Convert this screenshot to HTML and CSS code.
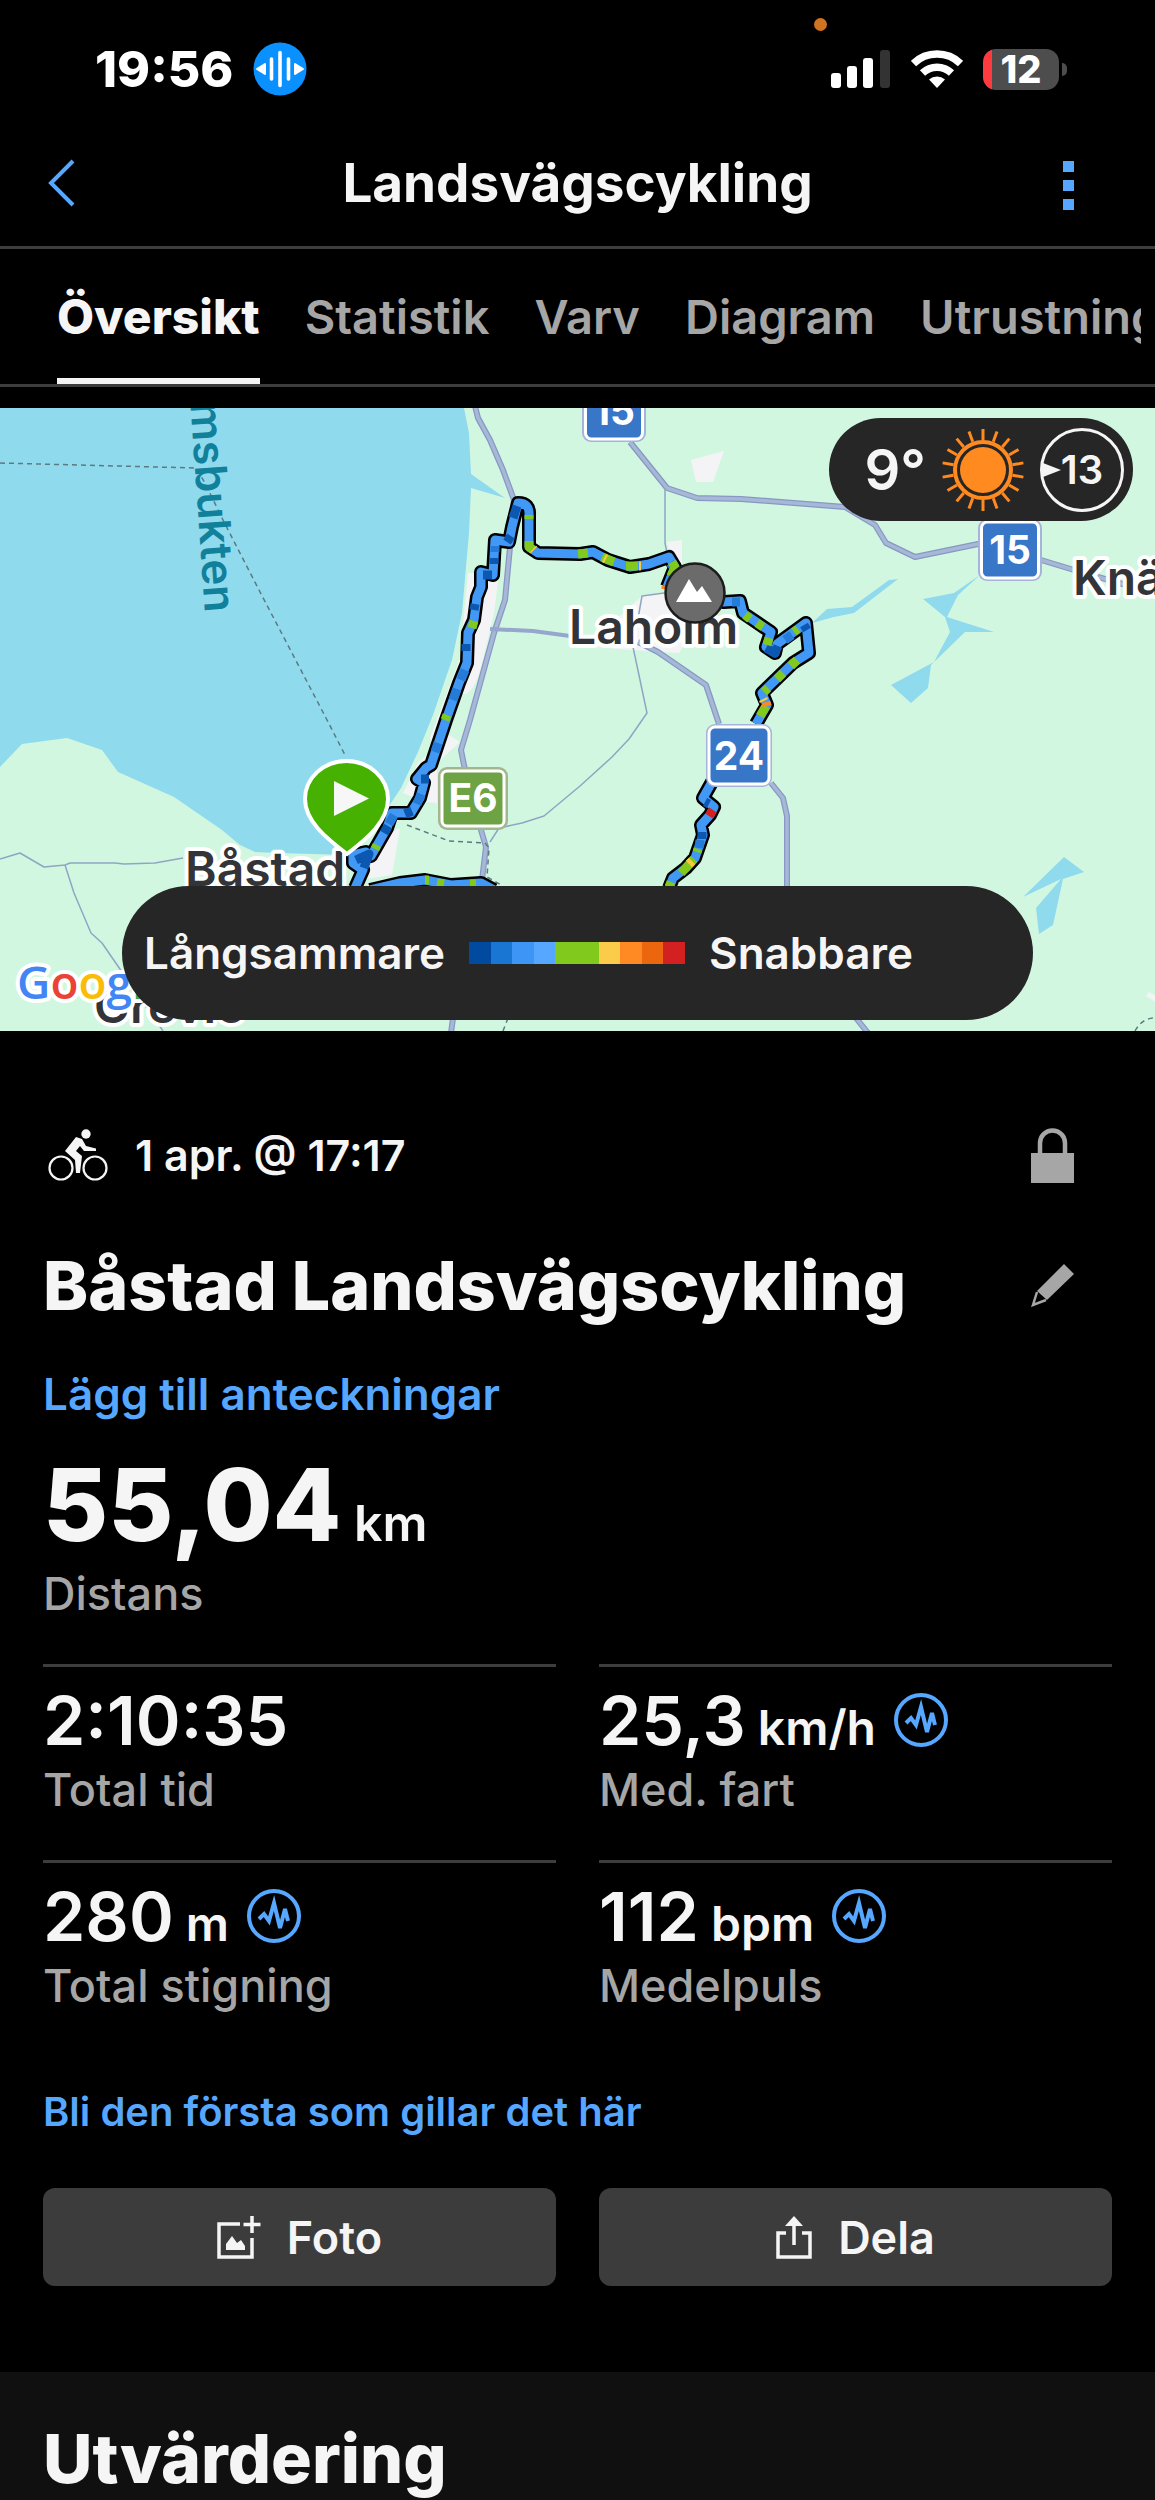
FILE: index.html
```html
<!DOCTYPE html>
<html lang="sv">
<head>
    <meta charset="UTF-8">
    <meta name="viewport" content="width=device-width, initial-scale=1.0">
    <title>Landsvägscykling</title>
    <link rel="stylesheet" href="styles.css">
</head>
<body>
    <div class="status-bar">
        <div class="status-left">
            <span class="clock">19:56</span>
            <svg width="54" height="54" viewBox="0 0 54 54" aria-hidden="true">
                <circle cx="27" cy="27" r="26.500" fill="#0a91ff"/>
                <path d="M18.500 17v20M27 10.500v33M35.500 17v20" stroke="#fff" stroke-width="3.600" stroke-linecap="round"/>
                <path d="M4 27l8-5v10zM50 27l-8-5v10z" fill="#fff" stroke="#fff" stroke-width="2" stroke-linejoin="round"/>
            </svg>
        </div>
        <span class="mic-dot"></span>
        <div class="status-right">
            <svg width="60" height="40" viewBox="0 0 60 40" aria-hidden="true">
                <g fill="#fff">
                    <rect x="0" y="24" width="10" height="15" rx="3"/>
                    <rect x="16" y="17" width="10" height="22" rx="3"/>
                    <rect x="32" y="9" width="10" height="30" rx="3"/>
                </g>
                <rect x="49" y="1" width="10" height="38" rx="3" fill="#333"/>
            </svg>
            <svg width="52" height="40" viewBox="0 0 52 40" aria-hidden="true">
                <g fill="none" stroke="#fff" stroke-width="7.500">
                    <path d="M2.500 14.500a34 34 0 0 1 47 0"/>
                    <path d="M11.500 24a21 21 0 0 1 29 0"/>
                </g>
                <path d="M26 39l-8-8.500a12 12 0 0 1 16 0z" fill="#fff"/>
            </svg>
            <div class="battery"><span class="battery-level">12</span></div>
        </div>
    </div>

    <header class="header">
        <button class="icon-btn" aria-label="Tillbaka">
            <svg width="30" height="50" viewBox="0 0 30 50"><path d="M27 3L5 25l22 22" fill="none" stroke="#56a7ff" stroke-width="4"/></svg>
        </button>
        <h1>Landsvägscykling</h1>
        <button class="icon-btn more" aria-label="Mer">
            <svg width="11" height="56" viewBox="0 0 11 56" fill="#56a7ff"><path d="M0 6h11v11H0zM0 25h11v11H0zM0 44h11v11H0z"/></svg>
        </button>
    </header>

    <nav class="tabs">
        <div class="tab-list">
            <a href="#oversikt" class="active">Översikt</a>
            <a href="#statistik">Statistik</a>
            <a href="#varv">Varv</a>
            <a href="#diagram">Diagram</a>
            <a href="#utrustning">Utrustning</a>
        </div>
    </nav>

    <div class="map">
        <svg class="map-canvas" viewBox="0 0 1155 623" role="img" aria-label="Karta">
            <rect width="1155" height="623" fill="#d2f7e1"/>

            <!-- water -->
            <g fill="#90daee">
                <path d="M0 0H464L469 25L471 66L505 90L471 80L469 125L466 159L462 205L452 252L433 307L418 344L401 380L385 404L348 447L277 445L255 444L240 437L222 422L174 389L118 364L102 342L67 330L22 336L0 359Z"/>
                <path d="M812 215L827 201L852 199L889 172L898 171L854 205L834 209Z"/>
                <path d="M923 191L954 185L980 167L958 187L947 209L994 224L965 224L931 257L928 280L911 295L891 277L934 254L950 224L945 209Z"/>
                <path d="M1023 489L1064 449L1084 464L1063 471L1053 517L1039 526L1036 500L1061 471Z"/>
            </g>

            <!-- towns -->
            <g fill="#f4f4f6">
                <path d="M468 165H499L494 205L481 259Q472 292 459 285L446 300L433 345L430 330L460 250Z"/>
                <path d="M449 327L460 334L437 355V395L424 394L403 385L418 355Z"/>
                <path d="M400 420L392 467L365 471L380 430Z"/>
                <path d="M691 52L724 43L713 74H696Z"/>
                <path d="M667 134L682 132V165L672 155Z"/>
                <path d="M642 188L666 185L697 209L685 235L679 245L630 242L586 238Z"/>
                <path d="M1146 588l3-4l10 6v6z"/>
            </g>

            <!-- roads -->
            <g fill="none" stroke-linejoin="round">
                <g stroke="#8798c4" stroke-width="6">
                    <path d="M475-2L478 10L490 32L503 62L514 92L510 139L505 192L494 225L470 312L461 342L464 357L481 422L486 439L481 480M453 610L451 625"/>
                    <path d="M630 34L667 80L697 90L741 91L845 99L875 117L886 135L915 149L978 136L1041 152L1074 162L1126 177"/>
                    <path d="M638 234L658 244L706 277L719 316M771 375L783 390L787 408V480M856 610L868 625"/>
                </g>
                <g stroke="#a6b8d6" stroke-width="3.500">
                    <path d="M475-2L478 10L490 32L503 62L514 92L510 139L505 192L494 225L470 312L461 342L464 357L481 422L486 439L481 480M453 610L451 625"/>
                    <path d="M630 34L667 80L697 90L741 91L845 99L875 117L886 135L915 149L978 136L1041 152L1074 162L1126 177"/>
                    <path d="M638 234L658 244L706 277L719 316M771 375L783 390L787 408V480M856 610L868 625"/>
                </g>
                <path d="M490 221L533 223L570 228" stroke="#95a7cc" stroke-width="4"/>
                <g stroke="#8fa6c2" stroke-width="1.500">
                    <path d="M665 80V135L668 150M664 185L642 188L633 239L647 305L629 331L612 349L580 378L544 408L522 415L499 420L490 434"/>
                    <path d="M0 451L20 445L44 459L65 457L70 455L115 455L124 456L155 455L183 450M65 457L74 485L91 525L102 535L122 564L163 623"/>
                </g>
                <g stroke="#5c7a80" stroke-width="1.500" stroke-dasharray="5 4">
                    <path d="M0 55L196 60L205 75L222 110L259 182L326 310L345 347"/>
                    <path d="M407 417L449 433L485 435L489 440L487 469L503 478M508 610L503 623M1135 623Q1142 610 1155 610"/>
                </g>
            </g>

            <!-- place names -->
            <g class="place">
                <text x="569" y="236">Laholm</text>
                <text x="185" y="478">Båstad</text>
                <text x="1073" y="187">Knäred</text>
                <text x="94" y="615">Grevie</text>
            </g>
            <text class="place-water" transform="translate(205 205) rotate(86)" text-anchor="end">msbukten</text>

            <!-- ride -->
            <g fill="none" stroke-linejoin="round">
                <g stroke="#000" stroke-width="14">
                    <path d="M355 480L363 462L353 455V447L366 444L371 448L387 420L392 405L411 405L420 390L424 375L417 371L426 360L431 357L446 312L459 275L467 255L468 225L474 212L477 189L481 179V164L493 167L495 132L509 134L512 119L518 95Q530 95 529 107L529 139L538 145L580 146L593 144L608 152L630 159L649 156L669 149L675 159L667 179M700 190L724 194L740 193L743 205L771 224L766 239L775 245L777 236L806 215L809 245L793 255L762 285L767 297L756 316M712 374L703 390L714 399L710 407L701 417L703 427L695 450L686 460L673 470L669 480"/>
                    <path d="M370 482L400 475L425 472L451 477L481 475L494 482"/>
                </g>
                <g stroke="#4299f5" stroke-width="9">
                    <path d="M355 480L363 462L353 455V447L366 444L371 448L387 420L392 405L411 405L420 390L424 375L417 371L426 360L431 357L446 312L459 275L467 255L468 225L474 212L477 189L481 179V164L493 167L495 132L509 134L512 119L518 95Q530 95 529 107L529 139L538 145L580 146L593 144L608 152L630 159L649 156L669 149L675 159L667 179M700 190L724 194L740 193L743 205L771 224L766 239L775 245L777 236L806 215L809 245L793 255L762 285L767 297L756 316M712 374L703 390L714 399L710 407L701 417L703 427L695 450L686 460L673 470L669 480"/>
                    <path d="M370 482L400 475L425 472L451 477L481 475L494 482"/>
                </g>
                <!-- slow parts -->
                <path d="M513 110L517 98M507 134L511 128M494 150V156M483 167H492M474 202L475 196M466 243V236M421 371H429M405 406L412 403M384 425L388 418M356 452L369 446L364 460M766 240L775 245L778 238M804 217L807 222M702 424L702 431M705 394L709 396" stroke="#0c58b0" stroke-width="9"/>
                <path d="M465 262L461 272M457 281L453 292M438 335L435 344M421 386L417 396M394 407L389 416M495 144V138M785 232L792 227M670 155L674 160M732 194H740M700 432L699 440" stroke="#247bd8" stroke-width="9"/>
                <!-- fast parts -->
                <g stroke="#82c91e" stroke-width="9">
                    <path d="M474 213L472 220M447 307L445 312M377 437L375 441M529 107V111M529 133V139L533 142M578 146L588 145"/>
                    <path d="M602 149L614 154M626 158L638 158M672 154L675 159L671 168"/>
                    <path d="M745 207L750 211M757 215L763 219M769 230L767 237M794 224L798 221M797 252L791 258M783 265L777 271M768 280L764 284M766 298L760 308M694 451L681 465M671 474L669 479"/>
                    <path d="M425 472L429 472M437 475L444 476M470 476L476 476M698 441L697 444"/>
                </g>
                <g stroke="#f8cb3f" stroke-width="9">
                    <path d="M533 141L534 142M604 150L606 151M639 158H641M692 453L689 456M763 291L764 293"/>
                    <path d="M766 294L767 298M666 178L666 181" stroke="#fb8a24"/>
                    <path d="M713 402L709 408" stroke="#d62020"/>
                </g>
            </g>

            <!-- road signs -->
            <g class="sign">
                <g fill="#3876c8" stroke="#fff" stroke-width="3">
                    <rect x="582" y="-28" width="64" height="62" rx="9" fill="#a6b4dc" stroke="none"/>
                    <rect x="585.500" y="-25" width="57" height="56" rx="6"/>
                    <rect x="978" y="111" width="64" height="62" rx="9" fill="#a6b4dc" stroke="none"/>
                    <rect x="981.500" y="114" width="57" height="56" rx="6"/>
                    <rect x="706" y="316" width="66" height="63" rx="9" fill="#a6b4dc" stroke="none"/>
                    <rect x="709" y="319" width="60" height="57" rx="6"/>
                </g>
                <rect x="438" y="359" width="70" height="63" rx="9" fill="#a3b78e"/>
                <rect x="442" y="363" width="62" height="55" rx="5" fill="#6da245" stroke="#fff" stroke-width="3"/>
                <text x="614" y="17">15</text>
                <text x="1010" y="156">15</text>
                <text x="739" y="362">24</text>
                <text x="473" y="404">E6</text>
            </g>

            <!-- pins -->
            <circle cx="695" cy="185" r="29.500" fill="#6b6b6b" stroke="#1c1c1c" stroke-width="2.500"/>
            <path d="M676 194L689 171L697 184L702 178L712 194Z" fill="#fff"/>
            <path d="M347 446C326 430 305 413 305 391a41.500 38 0 0 1 83 0C388 413 368 430 347 446Z" fill="#46b100" stroke="#fff" stroke-width="4"/>
            <path d="M334 373V408L369 390.500Z" fill="#f7f7f7"/>

            <text class="google" x="17" y="591"><tspan fill="#4285f4">G</tspan><tspan fill="#ea4335">o</tspan><tspan fill="#fbbc05">o</tspan><tspan fill="#4285f4">g</tspan><tspan fill="#34a853">l</tspan></text>
        </svg>

        <div class="weather">
            <span class="temp">9°</span>
            <svg width="84" height="84" viewBox="-42 -42 84 84" stroke="#ff8a20" stroke-width="3" aria-hidden="true">
                <circle r="23" fill="#ff8a20" stroke="none"/>
                <circle r="28" fill="none" stroke-width="4"/>
                <path d="M0-30V-41"/>
                <path d="M0-30V-41" transform="rotate(20)"/>
                <path d="M0-30V-41" transform="rotate(40)"/>
                <path d="M0-30V-41" transform="rotate(60)"/>
                <path d="M0-30V-41" transform="rotate(80)"/>
                <path d="M0-30V-41" transform="rotate(100)"/>
                <path d="M0-30V-41" transform="rotate(120)"/>
                <path d="M0-30V-41" transform="rotate(140)"/>
                <path d="M0-30V-41" transform="rotate(160)"/>
                <path d="M0-30V-41" transform="rotate(180)"/>
                <path d="M0-30V-41" transform="rotate(200)"/>
                <path d="M0-30V-41" transform="rotate(220)"/>
                <path d="M0-30V-41" transform="rotate(240)"/>
                <path d="M0-30V-41" transform="rotate(260)"/>
                <path d="M0-30V-41" transform="rotate(280)"/>
                <path d="M0-30V-41" transform="rotate(300)"/>
                <path d="M0-30V-41" transform="rotate(320)"/>
                <path d="M0-30V-41" transform="rotate(340)"/>
            </svg>
            <span class="wind">13</span>
        </div>

        <div class="legend">
            <span>Långsammare</span>
            <div class="scale">
                <i class="s1"></i><i class="s2"></i><i class="s3"></i><i class="s4"></i><i class="s5"></i><i class="s5"></i><i class="s6"></i><i class="s7"></i><i class="s8"></i><i class="s9"></i>
            </div>
            <span>Snabbare</span>
        </div>
    </div>

    <main class="activity">
        <div class="meta">
            <svg width="60" height="52" viewBox="0 0 60 52" aria-hidden="true">
                <g fill="none" stroke="#f5f5f5" stroke-width="2.200">
                    <circle cx="13" cy="39" r="11.500"/>
                    <circle cx="47" cy="39" r="11.500"/>
                </g>
                <circle cx="38" cy="5" r="4.700" fill="#f5f5f5"/>
                <path d="M28 8L34 10L38 17L48 19.500V22H36L32 17L28 22L34 27L32 44H28L27 31L17 22Z" fill="#f5f5f5"/>
            </svg>
            <span class="date">1 apr. @ 17:17</span>
            <svg class="trail" width="43" height="55" viewBox="0 0 43 55" aria-hidden="true">
                <path d="M0 25H43V55H0Z" fill="#a6a6a6"/>
                <path d="M9 26V15a12 12 0 0 1 25 0V26" fill="none" stroke="#a6a6a6" stroke-width="4.500"/>
            </svg>
        </div>

        <div class="title-row">
            <h2>Båstad Landsvägscykling</h2>
            <button class="icon-btn trail" aria-label="Redigera">
                <svg width="43" height="43" viewBox="0 0 43 43">
                    <path d="M33 0L43 10L16 36L6 27Z" fill="#a6a6a6"/>
                    <path d="M6 28L2 41L15 36" fill="none" stroke="#a6a6a6" stroke-width="2.500"/>
                </svg>
            </button>
        </div>

        <a class="note-link" href="#anteckningar">Lägg till anteckningar</a>

        <div class="distance">55,04<span class="unit"> km</span></div>
        <div class="label">Distans</div>

        <div class="stats">
            <div class="stat">
                <div class="value">2:10:35</div>
                <div class="label">Total tid</div>
            </div>
            <div class="stat">
                <div class="value"><span>25,3<span class="unit"> km/h</span></span>
                    <svg class="pulse" viewBox="0 0 54 54" aria-hidden="true"><circle cx="27" cy="27" r="25"/><path d="M12 30L17 25L22 32L27 14L33 39L38 20L41 32"/></svg>
                </div>
                <div class="label">Med. fart</div>
            </div>
            <div class="stat">
                <div class="value"><span>280<span class="unit"> m</span></span>
                    <svg class="pulse" viewBox="0 0 54 54" aria-hidden="true"><circle cx="27" cy="27" r="25"/><path d="M12 30L17 25L22 32L27 14L33 39L38 20L41 32"/></svg>
                </div>
                <div class="label">Total stigning</div>
            </div>
            <div class="stat">
                <div class="value"><span>112<span class="unit"> bpm</span></span>
                    <svg class="pulse" viewBox="0 0 54 54" aria-hidden="true"><circle cx="27" cy="27" r="25"/><path d="M12 30L17 25L22 32L27 14L33 39L38 20L41 32"/></svg>
                </div>
                <div class="label">Medelpuls</div>
            </div>
        </div>

        <a class="like-link" href="#gilla">Bli den första som gillar det här</a>

        <div class="actions">
            <button class="action">
                <svg width="44" height="44" viewBox="0 0 44 44" aria-hidden="true">
                    <path d="M23 9H2V42H35V23" fill="none" stroke="#f5f5f5" stroke-width="3.500"/>
                    <path d="M35 1V18M26.500 9.500H43.500" stroke="#f5f5f5" stroke-width="3.500"/>
                    <path d="M9 35V29L15 21L20 28L24 25L28 31V35Z" fill="#f5f5f5"/>
                </svg>
                Foto
            </button>
            <button class="action">
                <svg width="36" height="44" viewBox="0 0 36 44" aria-hidden="true">
                    <path d="M10 18H2V42H34V18H26M18 30V6" fill="none" stroke="#f5f5f5" stroke-width="3.500"/>
                    <path d="M18 1L27 11H9Z" fill="#f5f5f5"/>
                </svg>
                Dela
            </button>
        </div>
    </main>

    <section class="review">
        <h2>Utvärdering</h2>
    </section>
</body>
</html>
```
FILE: styles.css
```css
* {
    box-sizing: border-box;
}

body {
    margin: 0;
    background-color: #000;
    color: #f5f5f5;
    font-family: Inter, "Liberation Sans", sans-serif;
}

h1, h2 {
    margin: 0;
}

a {
    text-decoration: none;
    color: #56a7ff;
}

button {
    border: none;
    padding: 0;
    background: none;
    color: inherit;
    font-family: inherit;
}

svg {
    display: block;
    flex-shrink: 0;
}

/* status bar */
.status-bar {
    position: relative;
    display: flex;
    justify-content: space-between;
    align-items: center;
    height: 120px;
    padding: 18px 96px 0 95px;
    color: #fff;
}

.status-left, .status-right {
    display: flex;
    align-items: center;
    gap: 20px;
}

.clock {
    font-size: 50px;
    font-weight: 800;
}

.mic-dot {
    position: absolute;
    top: 18px;
    right: 328px;
    width: 13px;
    height: 13px;
    border-radius: 50%;
    background-color: #ce7423;
}

.battery {
    position: relative;
    width: 76px;
    height: 41px;
    border-radius: 13px;
    background: linear-gradient(to right, #ff3b40 9px, #4d4d4d 9px);
    text-align: center;
}

.battery::after {
    content: "";
    position: absolute;
    right: -8px;
    top: 14px;
    width: 5px;
    height: 13px;
    border-radius: 0 6px 6px 0;
    background-color: #4d4d4d;
}

.battery-level {
    font-size: 38px;
    font-weight: 800;
    line-height: 41px;
}

/* header */
.header {
    display: grid;
    grid-template-columns: 1fr auto 1fr;
    align-items: center;
    height: 129px;
    padding: 0 46px;
    border-bottom: 3px solid #3d3d3d;
}

.header h1 {
    font-size: 53px;
    font-weight: 700;
}

.header .more {
    justify-self: end;
    margin-right: 35px;
}

.header .icon-btn {
    width: fit-content;
}

.tabs {
    height: 138px;
    margin-bottom: 21px;
    padding: 0 14px 0 57px;
    border-bottom: 3px solid #3d3d3d;
}

.tab-list {
    display: flex;
    gap: 45px;
    overflow: hidden;
}

.tabs a {
    color: #a6a6a6;
    font-size: 47px;
    font-weight: 600;
    line-height: 135px;
}

.tabs a.active {
    color: #f5f5f5;
    font-size: 48px;
    font-weight: 800;
    box-shadow: inset 0 -6px #f5f5f5;
}

/* map */
.map {
    position: relative;
    overflow: hidden;
}

.map-canvas {
    width: 100%;
    height: auto;
}

.place text {
    font-size: 48px;
    font-weight: 600;
    fill: #333438;
    stroke: #fff;
    stroke-width: 8px;
    stroke-linejoin: round;
    paint-order: stroke;
}

.place-water {
    font-size: 44px;
    font-weight: 600;
    fill: #11809a;
}

.sign text {
    font-size: 39px;
    font-weight: 700;
    fill: #fff;
    text-anchor: middle;
}

.google {
    font-family: "Open Sans", sans-serif;
    font-size: 46px;
    font-weight: 600;
    stroke: #fff;
    stroke-width: 8px;
    stroke-linejoin: round;
    paint-order: stroke;
}

.weather, .legend {
    position: absolute;
    display: flex;
    align-items: center;
    background-color: #262626;
}

.weather {
    top: 10px;
    right: 22px;
    height: 103px;
    padding: 0 9px 0 36px;
    gap: 15px;
    border-radius: 52px;
}

.temp {
    font-size: 56px;
    font-weight: 600;
}

.wind {
    position: relative;
    width: 84px;
    height: 84px;
    border: 3px solid #f5f5f5;
    border-radius: 50%;
    font-size: 40px;
    font-weight: 600;
    line-height: 78px;
    text-align: center;
}

.wind::before {
    content: "";
    position: absolute;
    left: 0;
    top: 32px;
    border: 7px solid transparent;
    border-left: 18px solid #f5f5f5;
    border-right: 0;
}

.legend {
    left: 122px;
    right: 122px;
    bottom: 11px;
    height: 134px;
    padding: 0 22px;
    gap: 24px;
    border-radius: 67px;
    font-size: 44px;
    font-weight: 600;
}

.scale {
    display: flex;
    width: 216px;
    height: 22px;
}

.scale i {
    flex: 1;
}

.s1 { background-color: #004a9f; }
.s2 { background-color: #1976d2; }
.s3 { background-color: #3d96f5; }
.s4 { background-color: #56a7ff; }
.s5 { background-color: #82c91e; }
.s6 { background-color: #fbcb4a; }
.s7 { background-color: #ff8a24; }
.s8 { background-color: #ec6610; }
.s9 { background-color: #d32020; }

/* activity */
.activity {
    padding: 93px 43px 86px;
}

.meta, .title-row {
    display: flex;
    align-items: center;
}

.meta {
    height: 62px;
    padding-left: 5px;
    gap: 27px;
    font-size: 43px;
    font-weight: 600;
}

.trail {
    margin-left: auto;
    margin-right: 38px;
}

.title-row {
    margin-top: 57px;
}

h2 {
    font-size: 68px;
    font-weight: 800;
    line-height: 84px;
}

.note-link, .like-link {
    display: block;
    font-weight: 600;
}

.note-link {
    margin-top: 39px;
    font-size: 44px;
    line-height: 56px;
}

.distance {
    margin-top: 28px;
    font-size: 100px;
    font-weight: 800;
    line-height: 110px;
}

.unit {
    font-size: 50px;
    font-weight: 600;
    line-height: 1;
}

.label {
    margin-top: 8px;
    color: #a6a6a6;
    font-size: 45px;
    font-weight: 500;
    line-height: 52px;
}

.stats, .actions {
    display: grid;
    grid-template-columns: 1fr 1fr;
    column-gap: 43px;
}

.stats {
    margin-top: 44px;
}

.stat {
    padding: 17px 0 44px;
    border-top: 3px solid #3d3d3d;
}

.value {
    display: flex;
    align-items: center;
    gap: 18px;
    font-size: 68px;
    font-weight: 600;
    line-height: 72px;
}

.value .unit {
    font-size: 48px;
}

.pulse {
    width: 54px;
    height: 54px;
    fill: none;
    stroke: #56a7ff;
    stroke-width: 4;
}

.like-link {
    margin-top: 30px;
    font-size: 40px;
    line-height: 52px;
}

.actions {
    margin-top: 50px;
}

.action {
    display: flex;
    justify-content: center;
    align-items: center;
    gap: 26px;
    height: 98px;
    border-radius: 12px;
    background-color: #3c3c3c;
    font-size: 45px;
    font-weight: 600;
}

.review {
    padding: 44px 43px 0;
    background-color: #101010;
}
```
